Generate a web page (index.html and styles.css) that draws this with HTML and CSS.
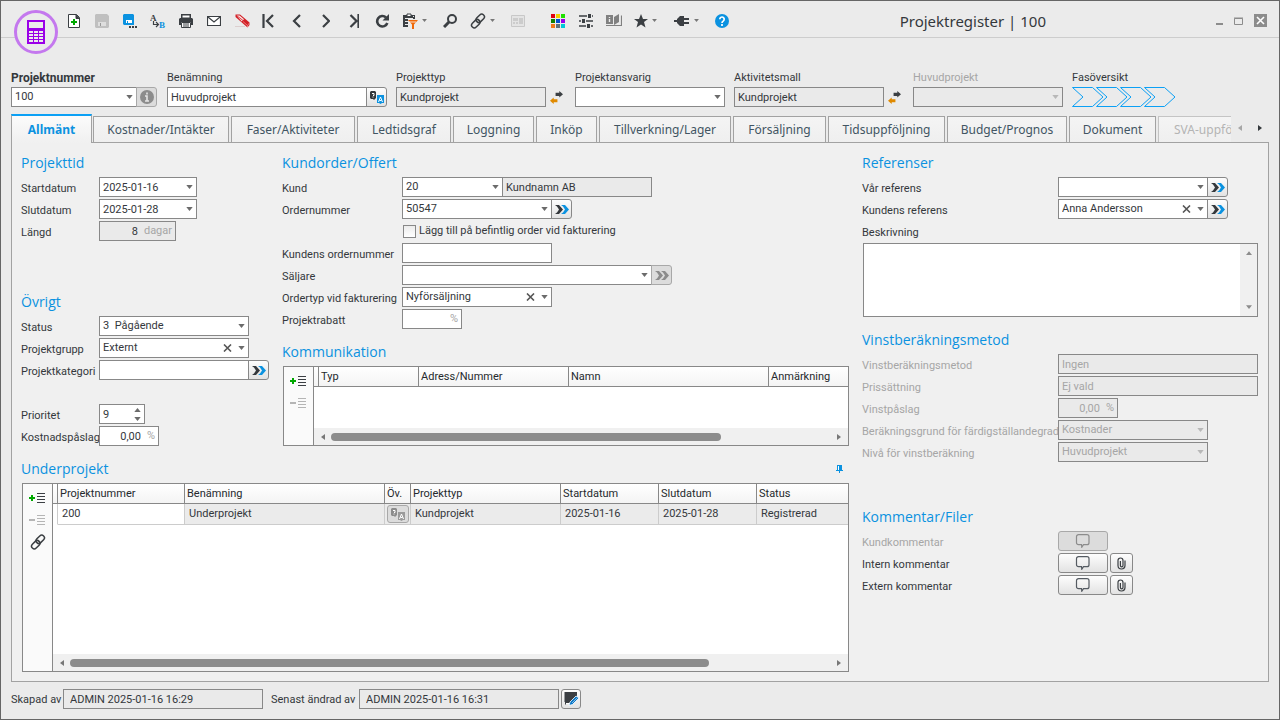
FILE: index.html
```html
<!DOCTYPE html>
<html lang="sv">
<head>
<meta charset="utf-8">
<title>Projektregister | 100</title>
<link rel="stylesheet" href="styles.css">
</head>
<body>
<svg class="defs" aria-hidden="true">
  <symbol id="caret" viewBox="0 0 8 5"><path d="M0 0h8L4 5z" fill="currentColor"/></symbol>
  <symbol id="tleft" viewBox="0 0 4 6"><path d="M4 0v6L0 3z" fill="currentColor"/></symbol>
  <symbol id="tright" viewBox="0 0 4 6"><path d="M0 0v6l4-3z" fill="currentColor"/></symbol>
  <symbol id="goto" viewBox="0 0 14 9"><path d="M0 0h4l4 4.500L4 9H0l2-1.500L4 4.500 2 1.500z" fill="currentColor"/><path class="second" d="M6 0h4l4 4.500L10 9H6l2-1.500 2-3-2-3z"/></symbol>
  <symbol id="clear" viewBox="0 0 9 8"><path d="M1 0.500l7 7M8 0.500l-7 7" stroke="currentColor" stroke-width="1.600"/></symbol>
  <symbol id="swap" viewBox="0 0 14 14"><path d="M6 2h4V0l4 3.500L10 7V5.500H6z" fill="#3b3f43"/><path d="M8 12H4v2L0 10.500 4 7v2h4z" fill="#e08a00"/></symbol>
  <symbol id="translate" viewBox="0 0 14 13"><path class="q" d="M1 0h4l1 1v6L4 9 3 8H1L0 7V1z"/><path d="M2 2.500h2v2H3M3 5.500v1" stroke="#fff" fill="none"/><path class="a" d="M7 4h7v8h-2l-1.500 1L9 12H7z"/><path d="M8.500 11l2-5 2 5M9.500 9.500h2" stroke="#fff" fill="none"/></symbol>
  <symbol id="addrow" viewBox="0 0 17 12"><path d="M0 6h6M3 3v6" stroke="#00a800" stroke-width="2"/><path d="M8 1.500h8M8 4.500h8M8 7.500h8M8 10.500h8" stroke="#3b3f43"/></symbol>
  <symbol id="delrow" viewBox="0 0 17 12"><path d="M0 6h6" stroke="#b5b5b5" stroke-width="2"/><path d="M8 1.500h8M8 4.500h8M8 7.500h8M8 10.500h8" stroke="#b5b5b5"/></symbol>
  <symbol id="link" viewBox="0 0 16 16"><g fill="none" stroke="#3b3f43" stroke-width="1.500"><rect x="5.500" y="2.800" width="9.500" height="5.400" rx="2.700" transform="rotate(-45 10 5.400)"/><rect x="1" y="7.800" width="9.500" height="5.400" rx="2.700" transform="rotate(-45 6 10.600)"/></g></symbol>
  <symbol id="bubble" viewBox="0 0 16 14"><path d="M3.500 .700h8.500a2 2 0 0 1 2 2v6a2 2 0 0 1-2 2H8.500L6.800 13.200l-.3-2.500h-3a2 2 0 0 1-2-2v-6a2 2 0 0 1 2-2z" fill="none" stroke="currentColor" stroke-width="1.200"/></symbol>
  <symbol id="clip" viewBox="0 0 9 13"><path d="M1 3.500v5a3.500 3.500 0 0 0 7 0V3.500M1 3.500a2.500 2.500 0 0 1 5 0v5a1.300 1.300 0 0 1-2.600 0V4" fill="none" stroke="#3b3f43" stroke-width="1.200"/></symbol>
</svg>

<div class="window">
  <header class="titlebar">
    <div class="logo"><svg width="18" height="24" viewBox="0 0 18 24"><rect width="18" height="24" fill="#9a00e8"/><path d="M2 2h14v6H2z" fill="#ebebeb"/><path d="M2 11h4v2H2zM7 11h4v2H7zM12 11h4v2h-4zM2 14h4v2H2zM7 14h4v2H7zM12 14h4v2h-4zM2 17h4v2H2zM7 17h4v2H7zM12 17h4v2h-4zM2 20h4v2H2zM7 20h4v2H7zM12 20h4v2h-4z" fill="#ebebeb"/></svg></div>
    <nav class="toolbar">
      <button aria-label="Ny"><svg width="12" height="14" viewBox="0 0 12 14"><path d="M.500.500h8l3 3v10h-11z" fill="#fff" stroke="#3b3f43"/><path d="M8 .5v4h4" fill="#3b3f43" stroke="#3b3f43"/><path d="M3 8h6M6 5v6" stroke="#00a800" stroke-width="2"/></svg></button>
      <button aria-label="Spara"><svg width="14" height="14" viewBox="0 0 14 14"><path d="M0 1l1-1h11l2 2v11l-1 1H1l-1-1z" fill="#c0c0c0"/><path d="M3 8h8v4H3z" fill="#dedede"/><path d="M5 9h1v3H5z" fill="#999"/></svg></button>
      <button aria-label="Spara som"><svg width="15" height="14" viewBox="0 0 15 14"><path d="M0 1l1-1h9l1 1v10H1l-1-1z" fill="#0b92e0"/><path d="M3 6h6v3H3z" fill="#fff"/><path d="M4 7h1v2H4z" fill="#0b92e0"/><path d="M6 12h2v2H6zM9 12h2v2H9zM12 12h2v2h-2z" fill="#3b3f43"/></svg></button>
      <button aria-label="Byt namn"><svg width="16" height="16" viewBox="0 0 16 16"><text x="0" y="8" class="ico-serif" fill="#3b3f43">A</text><text x="9" y="15" class="ico-serif" fill="#0b92e0">B</text><path d="M3.500 8v3.500H8M6 9l2.500 2.500L6 14" fill="none" stroke="#3b3f43" stroke-width="1.200"/></svg></button>
      <button aria-label="Skriv ut"><svg width="14" height="14" viewBox="0 0 14 14"><path d="M2 0h10v4H2z" fill="#3b3f43"/><path d="M3.500 1.500h7v2h-7z" fill="#fff"/><path d="M0 5l1-1h12l1 1v6h-2V8H2v3H0z" fill="#3b3f43"/><path d="M2.500 8.500h9v5h-9z" fill="#fff" stroke="#3b3f43"/><path d="M4 10h6M4 12h6" stroke="#3b3f43"/></svg></button>
      <button aria-label="E-post"><svg width="14" height="12" viewBox="0 0 14 12"><path d="M.5 1.500h13v9H.5z" fill="#fff" stroke="#3b3f43" stroke-width="1.200"/><path d="M1 2l6 5 6-5" fill="none" stroke="#3b3f43" stroke-width="1.200"/></svg></button>
      <button aria-label="Radera"><svg width="15" height="14" viewBox="0 0 15 14"><path d="M0 12.500h10" stroke="#dccfcf"/><path d="M.5 3V.5h4.500L14.500 8.500v2.500l-2 2.500z" fill="#d21f26"/><path d="M1.500 1.500h3l4.500 3.700-2.200 2.300z" fill="#fbe3e3"/><path d="M1.500 1.500L8 6.500" stroke="#d21f26" stroke-width=".8"/><path d="M8 7.500l4.500 4V13M12.500 11.500l2-2.500" stroke="#f08a8a" stroke-width=".8" fill="none"/></svg></button>
      <button aria-label="Första"><svg width="16" height="14" viewBox="0 0 16 14"><path d="M1.500 0v14M11 1L5 7l6 6" fill="none" stroke="#3b3f43" stroke-width="2.200"/></svg></button>
      <button aria-label="Föregående"><svg width="12" height="14" viewBox="0 0 12 14"><path d="M8 1L2 7l6 6" fill="none" stroke="#3b3f43" stroke-width="2.200"/></svg></button>
      <button aria-label="Nästa"><svg width="8" height="14" viewBox="0 0 8 14"><path d="M1 1l6 6-6 6" fill="none" stroke="#3b3f43" stroke-width="2.200"/></svg></button>
      <button aria-label="Sista"><svg width="10" height="14" viewBox="0 0 10 14"><path d="M9.500 0v14M1.500 1l6 6-6 6" fill="none" stroke="#3b3f43" stroke-width="2.200"/></svg></button>
      <button aria-label="Uppdatera"><svg width="14" height="14" viewBox="0 0 14 14"><path d="M11 3.500A5.200 5.200 0 1 0 12.300 9" fill="none" stroke="#3b3f43" stroke-width="2.600"/><path d="M14 0v6.500H7.500z" fill="#3b3f43"/></svg></button>
      <button class="wide" aria-label="Urval"><svg width="16" height="16" viewBox="0 0 16 16"><path d="M1 2h12v4h2H6v8H1z" fill="#3b3f43"/><path d="M5 3V1h4v2" fill="#fff" stroke="#3b3f43"/><path d="M3 5.500h8M3 8.500h3M3 11.500h3M11 3.500h1" stroke="#ebebeb"/><path d="M6 7h10l-4 4.500V16h-2v-4.500z" fill="#f06a0a"/><path d="M7 9h7" stroke="#fff" stroke-width=".8"/></svg><svg class="dd" width="5" height="3"><use href="#caret"/></svg></button>
      <button aria-label="Sök"><svg width="15" height="14" viewBox="0 0 15 14"><circle cx="9" cy="5" r="4" fill="#ebebeb" stroke="#3b3f43" stroke-width="2"/><path d="M6 8l-5 5" stroke="#3b3f43" stroke-width="3"/></svg></button>
      <button class="wide" aria-label="Länkar"><svg width="16" height="16"><use href="#link"/></svg><svg class="dd" width="5" height="3"><use href="#caret"/></svg></button>
      <button aria-label="Layout"><svg width="14" height="12" viewBox="0 0 14 12"><path d="M.5.500h13v11H.5z" fill="#e4e4e4" stroke="#c8c8c8"/><path d="M2 3h5v3H2zM8 3h4v6H8zM2 7h2v2H2zM5 7h2v2H5z" fill="#ccc"/></svg></button>
      <span class="gap"></span>
      <button aria-label="Färger"><svg width="14" height="14" viewBox="0 0 14 14"><path d="M0 0h4v4H0z" fill="#e00010"/><path d="M5 0h4v4H5z" fill="#f0d000"/><path d="M10 0h4v4h-4z" fill="#20e000"/><path d="M0 5h4v4H0z" fill="#108000"/><path d="M5 5h4v4H5z" fill="#0050d0"/><path d="M10 5h4v4h-4z" fill="#9a00e8"/><path d="M0 10h4v4H0z" fill="#f07818"/><path d="M5 10h4v4H5z" fill="#607078"/><path d="M10 10h4v4h-4z" fill="#00c8d8"/></svg></button>
      <button aria-label="Inställningar"><svg width="14" height="14" viewBox="0 0 14 14"><path d="M0 2h14M0 7h14M0 12h14" stroke="#3b3f43" stroke-width="1.600"/><path d="M9 0h3v4H9zM3 5h3v4H3zM8 10h3v4H8z" fill="#3b3f43"/><path d="M8.500 0v4M12.500 0v4M2.500 5v4M6.500 5v4M7.500 10v4M11.500 10v4" stroke="#ebebeb"/></svg></button>
      <button aria-label="Bok"><svg width="16" height="13" viewBox="0 0 16 13"><path d="M0 1h7v9H0z" fill="#808080"/><path d="M8 3l5-3v8l-5 3z" fill="#808080"/><path d="M0 11.500h15.500V1.500" stroke="#808080" stroke-width="1.200" fill="none"/><path d="M3.500 3v1M3.500 5v3" stroke="#ebebeb" stroke-width="1.400" fill="none"/></svg></button>
      <button class="wide" aria-label="Favoriter"><svg width="14" height="14" viewBox="0 0 14 14"><path d="M7 0l2 5h5l-4 3 1.500 5.500L7 10.500l-4.500 3L4 8 0 5h5z" fill="#3b3f43"/></svg><svg class="dd" width="5" height="3"><use href="#caret"/></svg></button>
      <button class="wide" aria-label="Anslut"><svg width="16" height="12" viewBox="0 0 16 12"><path d="M0 5h3V4l3-3h4v2h5v2h-5v2h5v2h-5v2H6L3 8V7H0z" fill="#3b3f43"/></svg><svg class="dd" width="5" height="3"><use href="#caret"/></svg></button>
      <button aria-label="Hjälp"><svg width="14" height="14" viewBox="0 0 14 14"><circle cx="7" cy="7" r="7" fill="#0b92e0"/><path d="M4.800 5.200a2.200 2.200 0 1 1 3.600 1.700Q7 8 7 9M7 10v2" fill="none" stroke="#fff" stroke-width="1.700"/></svg></button>
    </nav>
    <h1>Projektregister | 100</h1>
    <div class="winctl">
      <button aria-label="Minimera"><svg width="7" height="10"><path d="M0 7h7v2H0z" fill="#8c8c8c"/></svg></button>
      <button aria-label="Maximera"><svg width="9" height="8"><path d="M.5 1.500h8v6h-8zM0 1h9" fill="none" stroke="#8c8c8c"/></svg></button>
      <button aria-label="Stäng"><svg width="13" height="13"><path d="M0 0h13v13H0z" fill="#8c8c8c"/><path d="M3 3l7 7M10 3l-7 7" stroke="#fff" stroke-width="1.600"/></svg></button>
    </div>
  </header>

  <section class="keyfields">
    <div class="kf"><label class="strong" for="pnr">Projektnummer</label><div class="line"><div class="combo w126"><select id="pnr"><option>100</option></select><svg width="7" height="4"><use href="#caret"/></svg></div><button class="btn off" aria-label="Info"><svg width="14" height="14" viewBox="0 0 14 14"><circle cx="7" cy="7" r="7" fill="#8c8c8c"/><path d="M7 2.500v2M5 6h2v5M5 11h4" stroke="#e4e4e4" stroke-width="1.600" fill="none"/></svg></button></div></div>
    <div class="kf"><label for="ben">Benämning</label><div class="line"><input class="box w200" id="ben" value="Huvudprojekt"><button class="btn" aria-label="Översätt"><svg class="tr" width="14" height="13"><use href="#translate"/></svg></button></div></div>
    <div class="kf"><label for="ptyp">Projekttyp</label><div class="line"><input class="box ro w150" id="ptyp" value="Kundprojekt" readonly><button class="swap" aria-label="Byt projekttyp"><svg width="13" height="13"><use href="#swap"/></svg></button></div></div>
    <div class="kf"><label for="pans">Projektansvarig</label><div class="line"><div class="combo w150"><select id="pans"><option></option></select><svg width="7" height="4"><use href="#caret"/></svg></div></div></div>
    <div class="kf"><label for="amall">Aktivitetsmall</label><div class="line"><input class="box ro w150" id="amall" value="Kundprojekt" readonly><button class="swap" aria-label="Byt aktivitetsmall"><svg width="13" height="13"><use href="#swap"/></svg></button></div></div>
    <div class="kf"><label class="dim" for="hproj">Huvudprojekt</label><div class="line"><div class="combo off w150"><select id="hproj" disabled><option></option></select><svg width="7" height="4"><use href="#caret"/></svg></div></div></div>
    <div class="kf"><span class="lbl">Fasöversikt</span><svg width="104" height="20" viewBox="0 0 104 20"><g fill="none" stroke="#0ba0f5"><path id="ph" d="M.5.500h20l10.500 9.500-10.500 9.500H.5L11 10z"/><use href="#ph" x="24"/><use href="#ph" x="48"/><use href="#ph" x="72"/></g></svg></div>
  </section>

  <div class="tabbar">
    <div class="tabs" role="tablist">
      <button role="tab" class="tab on" aria-selected="true">Allmänt</button>
      <button role="tab" class="tab">Kostnader/Intäkter</button>
      <button role="tab" class="tab">Faser/Aktiviteter</button>
      <button role="tab" class="tab">Ledtidsgraf</button>
      <button role="tab" class="tab">Loggning</button>
      <button role="tab" class="tab">Inköp</button>
      <button role="tab" class="tab">Tillverkning/Lager</button>
      <button role="tab" class="tab">Försäljning</button>
      <button role="tab" class="tab">Tidsuppföljning</button>
      <button role="tab" class="tab">Budget/Prognos</button>
      <button role="tab" class="tab">Dokument</button>
      <button role="tab" class="tab last" disabled>SVA-uppföljning</button>
    </div>
    <div class="tabnav"><button class="dim" aria-label="Vänster"><svg width="4" height="6"><use href="#tleft"/></svg></button><button aria-label="Höger"><svg width="4" height="6"><use href="#tright"/></svg></button></div>
  </div>

  <main class="panel">
    <div class="left">
      <div class="upper">
        <div class="col narrow">
          <section class="group time">
            <h2>Projekttid</h2>
            <div class="row"><label for="sd">Startdatum</label><div class="combo w98"><input id="sd" value="2025-01-16"><svg width="7" height="4"><use href="#caret"/></svg></div></div>
            <div class="row"><label for="ed">Slutdatum</label><div class="combo w98"><input id="ed" value="2025-01-28"><svg width="7" height="4"><use href="#caret"/></svg></div></div>
            <div class="row"><label for="len">Längd</label><div class="combo ro w77"><input class="num" id="len" value="8" readonly><span class="unit">dagar</span></div></div>
          </section>
          <section class="group">
            <h2>Övrigt</h2>
            <div class="row"><label for="st">Status</label><div class="combo w150"><select id="st"><option>3&nbsp; Pågående</option></select><svg width="7" height="4"><use href="#caret"/></svg></div></div>
            <div class="row"><label for="pg">Projektgrupp</label><div class="combo w150"><select id="pg"><option>Externt</option></select><button class="x" aria-label="Rensa"><svg width="9" height="8"><use href="#clear"/></svg></button><svg width="7" height="4"><use href="#caret"/></svg></div></div>
            <div class="row"><label for="pk">Projektkategori</label><input class="box w150" id="pk"><button class="btn" aria-label="Gå till projektkategori"><svg width="14" height="9"><use href="#goto"/></svg></button></div>
            <div class="row spaced"><label for="pr">Prioritet</label><div class="combo w46"><input id="pr" value="9"><span class="spin"><svg class="up" width="7" height="4"><use href="#caret"/></svg><svg width="7" height="4"><use href="#caret"/></svg></span></div></div>
            <div class="row"><label for="kp">Kostnadspåslag</label><div class="combo w60"><input class="num" id="kp" value="0,00"><span class="unit">%</span></div></div>
          </section>
        </div>
        <div class="col mid">
          <section class="group order">
            <h2>Kundorder/Offert</h2>
            <div class="row"><label for="ku">Kund</label><div class="combo w101"><select id="ku"><option>20</option></select><svg width="7" height="4"><use href="#caret"/></svg></div><input class="box ro w150 joined" aria-label="Kundnamn" value="Kundnamn AB" readonly></div>
            <div class="row"><label for="on">Ordernummer</label><div class="combo w150"><select id="on"><option>50547</option></select><svg width="7" height="4"><use href="#caret"/></svg></div><button class="btn" aria-label="Gå till order"><svg width="14" height="9"><use href="#goto"/></svg></button></div>
            <div class="row check"><input type="checkbox" id="lt"><label for="lt">Lägg till på befintlig order vid fakturering</label></div>
            <div class="row"><label for="ko">Kundens ordernummer</label><input class="box w150" id="ko"></div>
            <div class="row"><label for="sa">Säljare</label><div class="combo w250"><select id="sa"><option></option></select><svg width="7" height="4"><use href="#caret"/></svg></div><button class="btn off" disabled aria-label="Gå till säljare"><svg width="14" height="9"><use href="#goto"/></svg></button></div>
            <div class="row"><label for="ot">Ordertyp vid fakturering</label><div class="combo w150"><select id="ot"><option>Nyförsäljning</option></select><button class="x" aria-label="Rensa"><svg width="9" height="8"><use href="#clear"/></svg></button><svg width="7" height="4"><use href="#caret"/></svg></div></div>
            <div class="row"><label for="rb">Projektrabatt</label><div class="combo w60"><input class="num" id="rb"><span class="unit">%</span></div></div>
          </section>
          <section class="group">
            <h2>Kommunikation</h2>
            <div class="gridbox">
              <div class="tools"><button aria-label="Lägg till rad"><svg width="17" height="12"><use href="#addrow"/></svg></button><button aria-label="Ta bort rad" disabled><svg width="17" height="12"><use href="#delrow"/></svg></button></div>
              <div class="gridmain">
                <table>
                  <colgroup><col class="c5"><col class="c100"><col class="c150"><col class="c200"><col></colgroup>
                  <thead><tr><th></th><th>Typ</th><th>Adress/Nummer</th><th>Namn</th><th>Anmärkning</th></tr></thead>
                </table>
                <div class="hscroll"><svg width="4" height="6"><use href="#tleft"/></svg><div class="track"><div class="thumb t1"></div></div><svg width="4" height="6"><use href="#tright"/></svg></div>
              </div>
            </div>
          </section>
        </div>
      </div>
      <section class="group sub">
        <div class="subhead"><h2>Underprojekt</h2><button class="pin" aria-label="Fäst"><svg width="7" height="8" viewBox="0 0 7 8"><path d="M1 0h5v5h1v1H4v2H3V6H0V5h1z" fill="#0b92e0"/><path d="M2.500 1v4" stroke="#fff"/></svg></button></div>
        <div class="gridbox">
          <div class="tools"><button aria-label="Lägg till rad"><svg width="17" height="12"><use href="#addrow"/></svg></button><button aria-label="Ta bort rad" disabled><svg width="17" height="12"><use href="#delrow"/></svg></button><button aria-label="Länk"><svg width="16" height="16"><use href="#link"/></svg></button></div>
          <div class="gridmain">
            <table>
              <colgroup><col class="c5"><col class="c127"><col class="c200"><col class="c26"><col class="c150"><col class="c98"><col class="c98"><col></colgroup>
              <thead><tr><th></th><th>Projektnummer</th><th>Benämning</th><th>Öv.</th><th>Projekttyp</th><th>Startdatum</th><th>Slutdatum</th><th>Status</th></tr></thead>
              <tbody><tr><td></td><td class="edit">200</td><td>Underprojekt</td><td class="bt"><button class="btn off mini" aria-label="Översätt"><svg class="tr" width="14" height="13"><use href="#translate"/></svg></button></td><td>Kundprojekt</td><td>2025-01-16</td><td>2025-01-28</td><td>Registrerad</td></tr></tbody>
            </table>
            <div class="hscroll"><svg width="4" height="6"><use href="#tleft"/></svg><div class="track"><div class="thumb t2"></div></div><svg width="4" height="6"><use href="#tright"/></svg></div>
          </div>
        </div>
      </section>
    </div>

    <div class="right">
      <section class="group refs">
        <h2>Referenser</h2>
        <div class="row"><label for="vr">Vår referens</label><div class="combo w150"><select id="vr"><option></option></select><svg width="7" height="4"><use href="#caret"/></svg></div><button class="btn" aria-label="Gå till vår referens"><svg width="14" height="9"><use href="#goto"/></svg></button></div>
        <div class="row"><label for="kr">Kundens referens</label><div class="combo w150"><select id="kr"><option>Anna Andersson</option></select><button class="x" aria-label="Rensa"><svg width="9" height="8"><use href="#clear"/></svg></button><svg width="7" height="4"><use href="#caret"/></svg></div><button class="btn" aria-label="Gå till kundens referens"><svg width="14" height="9"><use href="#goto"/></svg></button></div>
        <div class="row"><label for="bs">Beskrivning</label></div>
        <div class="area"><textarea id="bs"></textarea><div class="vscroll"><svg class="up" width="6" height="4"><use href="#caret"/></svg><svg width="6" height="4"><use href="#caret"/></svg></div></div>
      </section>
      <section class="group profit">
        <h2>Vinstberäkningsmetod</h2>
        <div class="row dim"><label for="vm">Vinstberäkningsmetod</label><input class="box ro w200" id="vm" value="Ingen" disabled></div>
        <div class="row dim"><label for="ps">Prissättning</label><input class="box ro w200" id="ps" value="Ej vald" disabled></div>
        <div class="row dim"><label for="vp">Vinstpåslag</label><div class="combo off w60"><input class="num" id="vp" value="0,00" disabled><span class="unit">%</span></div></div>
        <div class="row dim"><label for="bg">Beräkningsgrund för färdigställandegrad</label><div class="combo off w150"><select id="bg" disabled><option>Kostnader</option></select><svg width="7" height="4"><use href="#caret"/></svg></div></div>
        <div class="row dim"><label for="nv">Nivå för vinstberäkning</label><div class="combo off w150"><select id="nv" disabled><option>Huvudprojekt</option></select><svg width="7" height="4"><use href="#caret"/></svg></div></div>
      </section>
      <section class="group">
        <h2>Kommentar/Filer</h2>
        <div class="row dim"><label for="k1">Kundkommentar</label><button class="cbtn" id="k1" disabled><svg width="16" height="14"><use href="#bubble"/></svg></button></div>
        <div class="row"><label for="k2">Intern kommentar</label><button class="cbtn" id="k2"><svg width="16" height="14"><use href="#bubble"/></svg></button><button class="cbtn file" aria-label="Bifoga fil"><svg width="9" height="13"><use href="#clip"/></svg></button></div>
        <div class="row"><label for="k3">Extern kommentar</label><button class="cbtn" id="k3"><svg width="16" height="14"><use href="#bubble"/></svg></button><button class="cbtn file" aria-label="Bifoga fil"><svg width="9" height="13"><use href="#clip"/></svg></button></div>
      </section>
    </div>
  </main>

  <footer class="status">
    <label class="f1" for="cr">Skapad av</label><input class="box ro w200 who" id="cr" value="ADMIN 2025-01-16 16:29" readonly>
    <label class="f2" for="ch">Senast ändrad av</label><input class="box ro w200 who" id="ch" value="ADMIN 2025-01-16 16:31" readonly>
    <button class="btn log" aria-label="Logg"><svg width="15" height="14" viewBox="0 0 15 14"><path d="M1 0h12v5l-6 7H2L1 13z" fill="#3b3f43"/><path d="M0 1h2M0 3h2M0 5h2M0 7h2M0 9h2" stroke="#3b3f43"/><path d="M2 11.500h4" stroke="#fff"/><path d="M5 13.500l1-3.500 6-6 3 2-6.500 6.500z" fill="#0b78c8" stroke="#fff" stroke-width=".8"/><path d="M8 11l5-5" stroke="#fff" stroke-width=".5"/></svg></button>
  </footer>
</div>
</body>
</html>
```
FILE: styles.css
```css
* { box-sizing: border-box; }
body { margin: 0; font: 11px/16px Roboto, "Noto Sans", sans-serif; color: #34383c; }
button, input, select, textarea { font: inherit; color: inherit; margin: 0; padding: 0; border: 0; background: none; min-width: 0; border-radius: 0; }
select { appearance: none; }
button { display: flex; align-items: center; justify-content: center; }
svg { display: block; flex: none; }
.defs { position: absolute; width: 0; height: 0; }
h1, h2 { margin: 0; font-weight: 400; font-family: "Noto Sans", "Open Sans", sans-serif; }

.window { min-height: 100vh; display: flex; flex-direction: column; border: 1px solid #666; background: #ebebeb; }

.titlebar { position: relative; display: flex; align-items: center; height: 37px; padding: 3px 12px 0 59px; border-bottom: 1px solid #cdcdcd; }
.logo { position: absolute; left: 13px; top: 9px; width: 44px; height: 44px; border: 3px solid #c478ee; border-radius: 50%; background: #ebebeb; display: flex; align-items: center; justify-content: center; }
.toolbar { display: flex; flex: 1; }
.toolbar button { width: 28px; height: 28px; }
.toolbar .wide { width: 40px; justify-content: flex-start; padding-left: 6px; gap: 4px; }
.toolbar .gap { width: 12px; }
.dd { color: #777; }
.ico-serif { font: bold 9px "Liberation Serif", serif; }
h1 { font-size: 15px; line-height: 24px; white-space: nowrap; }
.winctl { display: flex; align-items: center; gap: 11px; margin-left: 170px; }

.keyfields { display: grid; grid-template-columns: 156px 229px 179px 159px 179px 159px auto; padding: 32px 10px 0; }
.kf { display: flex; flex-direction: column; gap: 1px; }
.line { display: flex; }
.strong { font-weight: 700; font-size: 12px; }
.dim, .dim label { color: #a6a6a6; }
.swap { margin-left: 4px; }

.box, .combo { height: 20px; border: 1px solid #888; background: #fff; flex: none; }
.box { padding: 0 3px; }
.combo { display: flex; align-items: center; padding: 0 3px; color: #34383c; }
.combo > input, .combo > select { flex: 1; width: 0; height: 18px; }
.combo > select { line-height: 18px; }
.combo > svg { color: #6b6b6b; margin: 0 0 0 4px; pointer-events: none; }
.combo > .x { color: #555; margin-right: 2px; }
.ro, .off { background: #eaeaea; }
.combo.off, .combo.off .unit, .dim .box { color: #a6a6a6; }
.combo.off select, .combo.off input { opacity: 1; color: #a6a6a6; }
.combo.off > svg { color: #b8b8b8; }
.combo > .num { text-align: right; }
.unit { color: #a6a6a6; margin-left: 6px; }
.joined { margin-left: -1px; }
.spin { display: flex; flex-direction: column; gap: 5px; color: #6b6b6b; }
.up { transform: rotate(180deg); }

.w46 { width: 46px; } .w60 { width: 60px; } .w77 { width: 77px; } .w98 { width: 98px; } .w101 { width: 101px; }
.w126 { width: 126px; } .w150 { width: 150px; } .w200 { width: 200px; } .w250 { width: 250px; }

.btn { width: 20px; height: 20px; border: 1px solid #888; border-radius: 0 3px 3px 0; background: linear-gradient(#fdfdfd, #e2e2e2); color: #34383c; margin-left: -1px; flex: none; }
.line .btn, .row .btn { width: 21px; }
.btn.off { background: #dcdcdc; border-color: #a8a8a8; color: #8c8c8c; --second: #8c8c8c; }
.second { fill: var(--second, #0b92e0); }
.tr { --q: #34383c; --a: #0b92e0; }
.off .tr { --q: #8c8c8c; --a: #9a9a9a; }
.q { fill: var(--q); }
.a { fill: var(--a); }

.tabbar { display: flex; height: 28px; margin: 7px 10px 0; }
.tabs { flex: 1; min-width: 0; display: grid; grid-template-columns: 80px 136px 124px 94px 81px 61px 132px 93px 117px 120px 87px minmax(0, 1fr); column-gap: 2px; align-items: end; }
.tab { height: 26px; border: 1px solid #a2a2a2; border-bottom: 0; background: linear-gradient(#f4f4f4, #efefef); font: 12px/16px "Noto Sans", "Open Sans", sans-serif; color: #415563; white-space: nowrap; }
.tab.on { height: 29px; margin: 0 -1px -1px 0; position: relative; border-top: 2px solid #0ba0f5; background: linear-gradient(#fbfbfb, #f0f0f0); font-weight: 700; color: #0b92e0; }
.tab.last { justify-content: flex-start; padding-left: 15px; overflow: hidden; border-right: 0; border-color: #c4c4c4; color: #b4b4b4; }
.tabnav { display: flex; gap: 16px; padding: 0 7px; }

.panel { flex: 1; display: flex; gap: 13px; margin: 0 10px; padding: 10px 10px 9px 9px; border: 1px solid #a2a2a2; background: #f0f0f0; }
.left { flex: 1; display: flex; flex-direction: column; min-width: 0; }
.right { width: 396px; }
.upper { display: flex; gap: 12px; }
.narrow { width: 249px; }
.mid { flex: 1; min-width: 0; }
.group { display: flex; flex-direction: column; gap: 2px; }
h2 { font-size: 14px; line-height: 20px; color: #0b92e0; margin-bottom: 2px; font-family: "Open Sans", "Noto Sans", sans-serif; }
.time { margin-bottom: 51px; }
.order { margin-bottom: 13px; }
.refs { margin-bottom: 13px; }
.profit { margin-bottom: 45px; }
.row { display: flex; height: 20px; }
.row label { padding-top: 4px; white-space: nowrap; flex: none; }
.narrow .row label { width: 78px; }
.mid .row label { width: 120px; }
.right .row label { width: 196px; }
.spaced { margin-top: 22px; }
.row.check { padding-left: 120px; align-items: center; gap: 3px; }
.mid .check label { width: auto; padding: 0; }
.check input { appearance: none; width: 13px; height: 13px; border: 1px solid #888; background: linear-gradient(#ececec, #fff); margin-left: 1px; }

.area { display: flex; height: 74px; border: 1px solid #888; background: #fff; margin-left: 1px; }
.area textarea { flex: 1; resize: none; }
.vscroll { width: 17px; background: #f0f0f0; color: #8c8c8c; display: flex; flex-direction: column; justify-content: space-between; align-items: center; padding: 7px 0; }

.cbtn { width: 50px; height: 20px; border: 1px solid #888; border-radius: 3px; background: linear-gradient(#fdfdfd, #e2e2e2); color: #555b62; }
.cbtn:disabled { background: #dcdcdc; border-color: #a8a8a8; color: #8c8c8c; }
.cbtn.file { width: 23px; margin-left: 2px; }

.gridbox { flex: 1; display: flex; border: 1px solid #888; background: #fff; margin-left: 1px; min-height: 80px; }
.tools { width: 30px; border-right: 1px solid #888; background: #fafafa; padding-top: 3px; display: flex; flex-direction: column; align-items: center; }
.tools button { width: 22px; height: 22px; }
.gridmain { flex: 1; min-width: 0; display: flex; flex-direction: column; justify-content: space-between; }
table { width: 100%; table-layout: fixed; border-collapse: separate; border-spacing: 0; }
th { height: 20px; padding: 0 2px; text-align: left; font-weight: 400; color: #25292d; border-right: 1px solid #888; border-bottom: 1px solid #888; background: linear-gradient(#fff, #f4f4f4); white-space: nowrap; line-height: 18px; }
th:last-child, td:last-child { border-right: 0; }
td { height: 21px; padding: 0 4px; background: #ebebeb; border-right: 1px solid #ccc; border-bottom: 1px solid #ccc; line-height: 18px; }
td:first-child { background: #fff; border-bottom-color: #fff; }
td.edit { background: #fff; }
td.bt { padding: 0 2px; }
.mini { width: 22px; height: 18px; margin: 0; border-radius: 3px; }
.c5 { width: 5px; } .c26 { width: 26px; } .c98 { width: 98px; } .c100 { width: 100px; } .c127 { width: 127px; } .c150 { width: 150px; } .c200 { width: 200px; }
.hscroll { height: 17px; background: #f0f0f0; color: #777; display: flex; align-items: center; padding: 0 7px; gap: 6px; }
.track { flex: 1; }
.thumb { height: 8px; border-radius: 4px; background: #8c8c8c; }
.t1 { width: 78%; }
.t2 { width: 84%; }
.sub { flex: 1; margin-top: 13px; }
.subhead { display: flex; justify-content: space-between; align-items: center; }
.pin { margin-right: 6px; padding-bottom: 3px; }

.status { display: flex; align-items: center; padding: 7px 10px 10px; }
.status label { padding-top: 2px; white-space: nowrap; flex: none; }
.f1 { width: 52px; }
.f2 { width: 88px; margin-left: 8px; }
.status .who { padding-left: 6px; }
.log { margin-left: 2px; border-radius: 3px; }
```
